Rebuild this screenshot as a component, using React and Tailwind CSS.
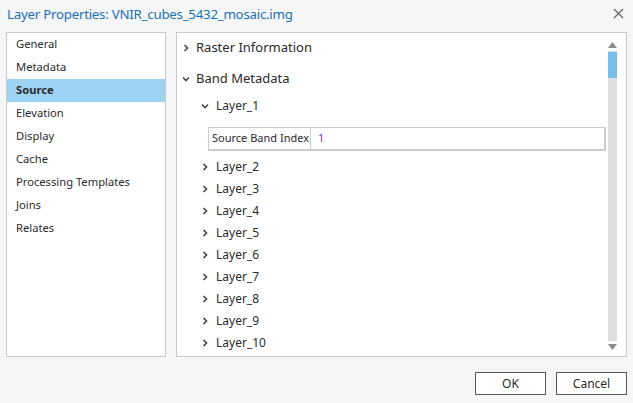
const navItems = ['General', 'Metadata', 'Source', 'Elevation', 'Display', 'Cache', 'Processing Templates', 'Joins', 'Relates']
const layers = ['Layer_2', 'Layer_3', 'Layer_4', 'Layer_5', 'Layer_6', 'Layer_7', 'Layer_8', 'Layer_9', 'Layer_10']

const ChevronRight = () => (
  <svg width="8" height="8" viewBox="0 0 8 8" className="shrink-0">
    <path d="M2.5 1 L5.5 4 L2.5 7" fill="none" stroke="#4a4a4a" strokeWidth="1.7" />
  </svg>
)

const ChevronDown = () => (
  <svg width="8" height="8" viewBox="0 0 8 8" className="shrink-0">
    <path d="M1 2.5 L4 5.5 L7 2.5" fill="none" stroke="#4a4a4a" strokeWidth="1.7" />
  </svg>
)

export default function App() {
  return (
    <div className="w-[633px] h-[403px] bg-[#f5f7f6] flex flex-col text-[#2b2b2b]" style={{ fontFamily: '"Noto Sans", "Open Sans", sans-serif' }}>
      <div className="h-[32px] flex items-center justify-between pl-[7px] pr-[9px]">
        <span className="text-[13.3px] tracking-[-0.25px] text-[#1c6fb3] leading-none -mt-[3px]">Layer Properties: VNIR_cubes_5432_mosaic.img</span>
        <svg width="11" height="11" viewBox="0 0 11 11" className="-mt-[5px]">
          <path d="M1 1 L10 10 M10 1 L1 10" stroke="#666" strokeWidth="1.3" />
        </svg>
      </div>

      <div className="flex gap-[10px] px-[6px] h-[325px]">
        <div className="w-[160px] border border-[#c9c9c9] bg-white">
          {navItems.map((item) => (
            <div
              key={item}
              className={`h-[23px] flex items-center pl-[9px] text-[11.2px] ${item === 'Source' ? 'bg-[#9cd2f2] font-bold' : ''}`}
            >
              {item}
            </div>
          ))}
        </div>

        <div className="flex-1 border border-[#c9c9c9] bg-white flex">
          <div className="flex-1 pl-[5px] pt-[4px]">
            <div className="h-[22px] flex items-center gap-[6px] text-[13px]">
              <ChevronRight /> <span>Raster Information</span>
            </div>
            <div className="h-[22px] mt-[9px] flex items-center gap-[6px] text-[13px]">
              <ChevronDown /> <span>Band Metadata</span>
            </div>
            <div className="pl-[19px]">
              <div className="h-[22px] mt-[5px] flex items-center gap-[7px] text-[12px]">
                <ChevronDown /> <span>Layer_1</span>
              </div>
              <div className="ml-[7px] mr-[2px] mt-[10px] h-[24px] flex border border-[#cccccc] border-r-2 border-b-2 text-[11px] whitespace-nowrap">
                <div className="w-[102px] border-r border-[#cccccc] flex items-center pl-[3px]">Source Band Index</div>
                <div className="flex items-center pl-[7px] text-[#7a3a9a]">1</div>
              </div>
              <div className="mt-[5px]">
                {layers.map((l) => (
                  <div key={l} className="h-[22px] flex items-center gap-[7px] text-[12px]">
                    <ChevronRight /> <span>{l}</span>
                  </div>
                ))}
              </div>
            </div>
          </div>
          <div className="w-[9px] mr-[9px] pt-[9px] pb-[6px] flex flex-col items-center">
            <svg width="9" height="6" viewBox="0 0 9 6"><path d="M4.5 0 L9 6 L0 6 Z" fill="#8a8a8a" /></svg>
            <div className="w-[9px] flex-1 mt-[3px] bg-[#dedede] flex flex-col">
              <div className="h-[26px] bg-[#78bdea] mt-[1px]" />
            </div>
            <svg width="9" height="6" viewBox="0 0 9 6" className="mt-[3px]"><path d="M0 0 L9 0 L4.5 6 Z" fill="#8a8a8a" /></svg>
          </div>
        </div>
      </div>

      <div className="flex justify-end gap-[10px] pr-[6px] mt-[15px]">
        <button className="w-[71px] h-[23px] border border-[#555] bg-white text-[12px]">OK</button>
        <button className="w-[71px] h-[23px] border border-[#555] bg-white text-[12px]">Cancel</button>
      </div>
    </div>
  )
}
